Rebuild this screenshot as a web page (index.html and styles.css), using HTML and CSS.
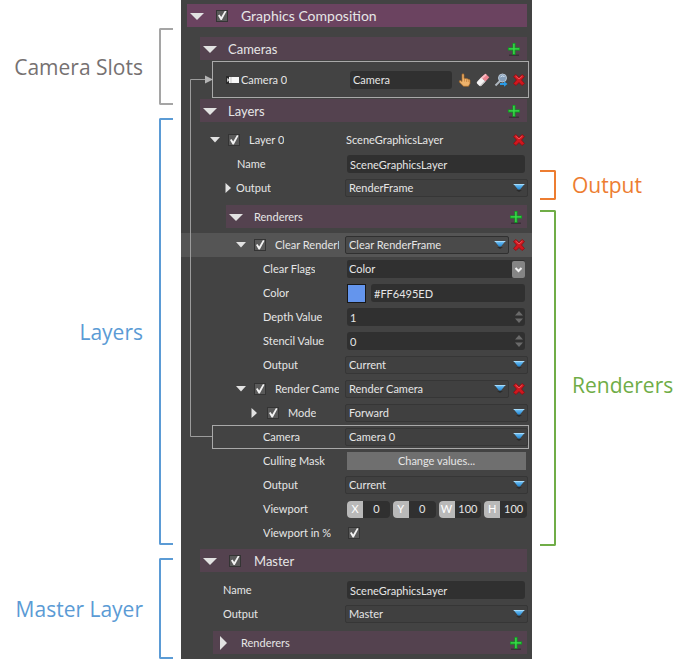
FILE: index.html
```html
<!DOCTYPE html>
<html lang="en">
<head>
<meta charset="utf-8">
<title>Graphics Composition</title>
<link rel="stylesheet" href="styles.css">
</head>
<body>
<svg class="defs" aria-hidden="true">
  <linearGradient id="blue" x1="0" y1="0" x2="0" y2="1"><stop offset="0" stop-color="#7cc8f8"/><stop offset="1" stop-color="#1f86d4"/></linearGradient>
  <symbol id="down" viewBox="0 0 16 16"><path d="M1 5H15L8 12Z" fill="#e2e2e2"/></symbol>
  <symbol id="down-s" viewBox="0 0 16 16"><path d="M3 5H13L8 10.500Z" fill="#e2e2e2"/></symbol>
  <symbol id="right" viewBox="0 0 16 16"><path d="M5 1V15L12 8Z" fill="#e2e2e2"/></symbol>
  <symbol id="right-s" viewBox="0 0 16 16"><path d="M5.500 3V13L11 8Z" fill="#e2e2e2"/></symbol>
  <symbol id="drop" viewBox="0 0 12 8"><path d="M3 6H9L6 8Z" fill="#2b2b2b"/><path d="M.5 0H11.500L7 5.500H5Z" fill="url(#blue)"/><path d="M.5 0H11.500L11 1H1Z" fill="#a5dbfb"/></symbol>
  <symbol id="plus" viewBox="0 0 16 16"><path d="M3 13.500H13V15H3Z" fill="#3b3039"/><path d="M6.500 2H9.500V6.500H14V9.500H9.500V14H6.500V9.500H2V6.500H6.500Z" fill="#0d9a20"/><path d="M7.200 2.700H8.600V7.200H13.200V8.400H8.600V13H7.200V8.400H2.700V7.200H7.200Z" fill="#3edb4d"/></symbol>
  <symbol id="cross" viewBox="0 0 14 14"><path d="M4 1.500L7 4.500L10 1.500L12.500 3.500L9.500 7L12.500 10.500L10 12.500L7 9.500L4 12.500L1.500 10.500L4.500 7L1.500 3.500Z" fill="#d0161e" stroke="#8d0c10" stroke-width=".8"/><path d="M3.600 3L7 6L10.400 3" fill="none" stroke="#f0575a"/></symbol>
</svg>
<main class="page">
  <div class="notes notes-left">
    <div class="note slots"><span>Camera Slots</span><i></i></div>
    <div class="note layers"><span>Layers</span><i></i></div>
    <div class="note master"><span>Master Layer</span><i></i></div>
  </div>

  <section class="panel">
    <div class="bar title">
      <button class="tw" aria-label="Collapse Graphics Composition"><svg><use href="#down"/></svg></button>
      <input type="checkbox" id="gc" checked><label for="gc">Graphics Composition</label>
    </div>

    <div class="bar">
      <button class="tw" aria-label="Collapse Cameras"><svg><use href="#down"/></svg></button>
      <h2>Cameras</h2><button class="add" aria-label="Add camera"><svg><use href="#plus"/></svg></button>
    </div>
    <div class="row framed slot">
      <div class="name">
        <svg class="cam" viewBox="0 0 14 10" aria-hidden="true"><path d="M0 1H3V9H0Z" fill="#292929"/><path d="M1 3L3 4V6L1 7Z" fill="#bbb"/><path d="M3 2H13V8H3Z" fill="#f6f6f6"/><path d="M5 2V8" stroke="#c7c7c7"/></svg>
        <label for="c0">Camera 0</label>
      </div>
      <div class="value">
        <input class="field" id="c0" value="Camera">
        <button class="tool" aria-label="Pick"><svg viewBox="0 0 14 14"><path d="M4 1.200Q5.300.3 6 1.500V5.500Q7.300 4.700 8 5.800Q9.300 5.200 10 6.300Q11.800 6 12 7.500V10.500L10.500 13.300H5.500L1.300 9Q1 7.300 2.700 7.600L4 8.500Z" fill="#eeb36c" stroke="#a96825" stroke-width=".7"/><path d="M6.500 6V8.500M8.500 6.500V9M10.300 7V9" stroke="#bd7932" stroke-width=".6"/></svg></button>
        <button class="tool" aria-label="Clear"><svg viewBox="0 0 14 14"><path d="M9.500.8L13.300 4.200L9.500 8.500L5 4.500Z" fill="#ee8591"/><path d="M9.500.8L10.700 1.900L6.300 6L5 4.500Z" fill="#f9bdc4"/><path d="M5 4.500L9.500 8.500L5 13Q4 13.500 3 12.500L1 10.500Q.3 9.500 1.300 8.500Z" fill="#f5f3f3"/><path d="M9.500 8.500L5 13L3.500 13L8.500 7.700Z" fill="#cbc7c8"/></svg></button>
        <button class="tool" aria-label="Find"><svg viewBox="0 0 14 14"><path d="M6 8L1.500 12.500" stroke="#aeb6be" stroke-width="2"/><circle cx="8.500" cy="5" r="4" fill="#86a0bb" stroke="#b8c6d3"/><path d="M6.500 4Q8 2 10.500 3.500" stroke="#dbe8f4" fill="none"/><path d="M6 10H10V8.300L13.500 11L10 13.700V12H6Z" fill="#2a9be6"/></svg></button>
        <button class="tool" aria-label="Remove"><svg viewBox="0 0 14 14"><use href="#cross"/></svg></button>
      </div>
    </div>

    <div class="bar group">
      <button class="tw" aria-label="Collapse Layers"><svg><use href="#down"/></svg></button>
      <h2>Layers</h2><button class="add" aria-label="Add layer"><svg><use href="#plus"/></svg></button>
    </div>
    <div class="row">
      <div class="name in1"><button class="tw" aria-label="Collapse layer"><svg><use href="#down-s"/></svg></button><input type="checkbox" id="l0" checked><label for="l0">Layer 0</label></div>
      <div class="value"><span class="text">SceneGraphicsLayer</span><button class="tool" aria-label="Remove"><svg viewBox="0 0 14 14"><use href="#cross"/></svg></button></div>
    </div>
    <div class="row">
      <div class="name leaf2"><label for="ln">Name</label></div>
      <div class="value"><input class="field" id="ln" value="SceneGraphicsLayer"></div>
    </div>
    <div class="row">
      <div class="name in2"><button class="tw" aria-label="Expand output"><svg><use href="#right-s"/></svg></button><label for="lo">Output</label></div>
      <div class="value"><span class="pick"><select id="lo"><option>RenderFrame</option></select><svg><use href="#drop"/></svg></span></div>
    </div>
    <div class="bar sub">
      <button class="tw" aria-label="Collapse Renderers"><svg><use href="#down"/></svg></button>
      <h3>Renderers</h3><button class="add" aria-label="Add renderer"><svg><use href="#plus"/></svg></button>
    </div>
    <div class="row selected">
      <div class="name in3"><button class="tw" aria-label="Collapse renderer"><svg><use href="#down-s"/></svg></button><input type="checkbox" id="r1" checked><label for="r1">Clear RenderFrame</label></div>
      <div class="value"><span class="pick"><select aria-label="Renderer type"><option>Clear RenderFrame</option></select><svg><use href="#drop"/></svg></span><button class="tool" aria-label="Remove"><svg viewBox="0 0 14 14"><use href="#cross"/></svg></button></div>
    </div>
    <div class="row">
      <div class="name leaf3"><label for="cf">Clear Flags</label></div>
      <div class="value"><span class="pick flags"><select id="cf"><option>Color</option></select><svg viewBox="0 0 13 17"><rect width="13" height="17" rx="2" fill="#858585"/><path d="M3.500 7L6.500 10L9.500 7" fill="none" stroke="#f1f1f1" stroke-width="2"/></svg></span></div>
    </div>
    <div class="row">
      <div class="name leaf3"><label for="co">Color</label></div>
      <div class="value"><button class="swatch" aria-label="Pick color"></button><input class="field" id="co" value="#FF6495ED"></div>
    </div>
    <div class="row">
      <div class="name leaf3"><label for="dv">Depth Value</label></div>
      <div class="value"><span class="spin"><input class="field" type="number" id="dv" value="1"><svg viewBox="0 0 10 14"><path d="M1 5.500L5 1L9 5.500ZM1 8.500L5 13L9 8.500Z" fill="#6a6a6a"/></svg></span></div>
    </div>
    <div class="row">
      <div class="name leaf3"><label for="sv">Stencil Value</label></div>
      <div class="value"><span class="spin"><input class="field" type="number" id="sv" value="0"><svg viewBox="0 0 10 14"><path d="M1 5.500L5 1L9 5.500ZM1 8.500L5 13L9 8.500Z" fill="#6a6a6a"/></svg></span></div>
    </div>
    <div class="row">
      <div class="name leaf3"><label for="o1">Output</label></div>
      <div class="value"><span class="pick"><select id="o1"><option>Current</option></select><svg><use href="#drop"/></svg></span></div>
    </div>
    <div class="row">
      <div class="name in3"><button class="tw" aria-label="Collapse renderer"><svg><use href="#down-s"/></svg></button><input type="checkbox" id="r2" checked><label for="r2">Render Camera</label></div>
      <div class="value"><span class="pick"><select aria-label="Renderer type"><option>Render Camera</option></select><svg><use href="#drop"/></svg></span><button class="tool" aria-label="Remove"><svg viewBox="0 0 14 14"><use href="#cross"/></svg></button></div>
    </div>
    <div class="row">
      <div class="name in4"><button class="tw" aria-label="Expand mode"><svg><use href="#right-s"/></svg></button><input type="checkbox" id="mo" checked><label for="mo">Mode</label></div>
      <div class="value"><span class="pick"><select aria-label="Mode"><option>Forward</option></select><svg><use href="#drop"/></svg></span></div>
    </div>
    <div class="row framed">
      <div class="name"><label for="ca">Camera</label></div>
      <div class="value"><span class="pick"><select id="ca"><option>Camera 0</option></select><svg><use href="#drop"/></svg></span></div>
    </div>
    <div class="row">
      <div class="name leaf3"><label for="cm">Culling Mask</label></div>
      <div class="value"><button class="change" id="cm">Change values...</button></div>
    </div>
    <div class="row">
      <div class="name leaf3"><label for="o2">Output</label></div>
      <div class="value"><span class="pick"><select id="o2"><option>Current</option></select><svg><use href="#drop"/></svg></span></div>
    </div>
    <div class="row">
      <div class="name leaf3"><span>Viewport</span></div>
      <div class="value rect">
        <span><label for="vx">X</label><input id="vx" value="0"></span>
        <span><label for="vy">Y</label><input id="vy" value="0"></span>
        <span><label for="vw">W</label><input id="vw" value="100"></span>
        <span><label for="vh">H</label><input id="vh" value="100"></span>
      </div>
    </div>
    <div class="row">
      <div class="name leaf3"><label for="vp">Viewport in %</label></div>
      <div class="value"><input type="checkbox" id="vp" checked></div>
    </div>

    <div class="bar group last">
      <button class="tw" aria-label="Collapse Master"><svg><use href="#down"/></svg></button>
      <input type="checkbox" id="ma" checked><label for="ma">Master</label>
    </div>
    <div class="row">
      <div class="name leaf1"><label for="mn">Name</label></div>
      <div class="value"><input class="field" id="mn" value="SceneGraphicsLayer"></div>
    </div>
    <div class="row">
      <div class="name leaf1"><label for="mout">Output</label></div>
      <div class="value"><span class="pick"><select id="mout"><option>Master</option></select><svg><use href="#drop"/></svg></span></div>
    </div>
    <div class="bar sub outer">
      <button class="tw" aria-label="Expand Renderers"><svg><use href="#right"/></svg></button>
      <h3>Renderers</h3><button class="add" aria-label="Add renderer"><svg><use href="#plus"/></svg></button>
    </div>
    <svg class="link" viewBox="0 0 24 364" aria-hidden="true"><path d="M23 362.500H1.500V5.500H17" fill="none" stroke="#9c9c9c"/><path d="M16 1.500L24 5.500L16 9.500Z" fill="#b4b4b4"/></svg>
  </section>

  <div class="notes notes-right">
    <div class="note output"><i></i><span>Output</span></div>
    <div class="note renderers"><i></i><span>Renderers</span></div>
  </div>
</main>
</body>
</html>
```
FILE: styles.css
```css
* { box-sizing: border-box; }

body {
  margin: 0;
  background: #fff;
  font-family: Lato, "Open Sans", sans-serif;
  font-size: 11px;
  line-height: 16px;
  color: #e6e6e6;
}

input, select, button { font: inherit; color: inherit; margin: 0; padding: 0; border: 0; border-radius: 0; background: none; }
svg { display: block; }
.defs { position: absolute; width: 0; height: 0; }

.page {
  display: grid;
  grid-template-columns: 181px 1fr 155px;
  min-height: 100vh;
}

/* Annotations: rows share the panel's height in proportion */
.notes { display: grid; font-family: "Open Sans", sans-serif; font-size: 21px; line-height: 28px; }
.notes-left { grid-template-rows: 28fr 77fr 13fr 427fr 13fr 101fr; padding-right: 8px; }
.notes-right { grid-template-rows: 170fr 30fr 10fr 336fr 113fr; padding-left: 8px; }
.note { display: flex; align-items: center; gap: 16px; min-height: 0; white-space: nowrap; }
.notes-left .note { justify-content: flex-end; }
.note i { align-self: stretch; flex: none; width: 14px; border: 2px solid; }
.notes-left i { border-right: 0; border-radius: 2px 0 0 2px; }
.notes-right i { width: 16px; border-left: 0; border-radius: 0 2px 2px 0; }
.slots { grid-row: 2; color: #767171; }
.slots i { border-color: #a5a5a5; }
.layers { grid-row: 4; color: #5b9bd5; }
.master { grid-row: 6; color: #5b9bd5; }
.output { grid-row: 2; color: #ed7d31; }
.renderers { grid-row: 4; color: #70ad47; }
.renderers span { padding-top: 14px; }

/* Panel */
.panel { position: relative; min-width: 0; padding: 4px 0; background: #434343; }
.link { position: absolute; left: 8px; top: 74px; width: 24px; height: 364px; }

.bar {
  display: flex;
  align-items: center;
  height: 23px;
  margin: 0 5px 0 19px;
  padding: 0 5px 0 2px;
  background: #54424f;
  font-size: 13px;
}
.bar h2, .bar h3 { flex: 1; margin: 0 0 0 10px; font-size: 13px; font-weight: 400; }
.bar h3 { font-size: 11px; }
.bar input { margin: 0 13px 0 11px; }
.title { margin: 0 5px 10px 6px; background: #6b4360; font-size: 14px; }
.group { margin-bottom: 6px; }
.last { margin-top: 4px; }
.sub { margin: 5px 5px 5px 45px; padding-right: 3px; }
.outer { margin-left: 32px; margin-bottom: 0; }
.tw, .tw svg, .add, .add svg { flex: none; width: 16px; height: 16px; }

.row {
  display: grid;
  grid-template-columns: 164px minmax(0, 1fr);
  align-items: center;
  height: 24px;
  padding-right: 4px;
}
.selected { background: #555; }
.framed { grid-template-columns: 132px minmax(0, 1fr); margin: 0 3px 0 31px; padding-right: 0; border: 1px solid #a9a9a9; }
.framed .name { padding-left: 50px; }
.slot { height: 37px; margin-block: 1px; }
.slot .name { gap: 1px; padding-left: 13px; }
.cam { width: 14px; height: 10px; }

.name { display: flex; align-items: center; min-width: 0; padding-right: 6px; overflow: hidden; white-space: nowrap; }
.name label { overflow: hidden; }
.name input { margin: 0 9px 0 5px; }
.in1 { padding-left: 26px; }
.in2 { padding-left: 39px; }
.in3 { padding-left: 52px; }
.in4 { padding-left: 65px; }
.leaf1 { padding-left: 42px; }
.leaf2 { padding-left: 56px; }
.leaf3 { padding-left: 82px; }

.value { display: flex; align-items: center; min-width: 0; }
.text { flex: 1; padding-left: 1px; }

input[type="checkbox"] {
  appearance: none;
  flex: none;
  width: 12px;
  height: 12px;
  background: #5a5a5a;
  border: 1px solid #343434;
}
input[type="checkbox"]:checked::before {
  content: "";
  display: block;
  width: 10px;
  height: 10px;
  background: #f2f2f2;
  clip-path: polygon(10% 50%, 25% 40%, 42% 65%, 80% 0, 95% 8%, 48% 95%, 36% 95%);
}
.value input[type="checkbox"] { margin-left: 3px; }

.field {
  flex: 1;
  width: 100%;
  min-width: 0;
  height: 18px;
  margin: 0 3px 0 2px;
  padding: 0 3px;
  border-radius: 3px;
  background: #303030;
}
.slot .field { margin: 0 6px 0 5px; }
.slot .tool { margin-right: 4px; }
input[type="number"] { appearance: textfield; }
input::-webkit-inner-spin-button { appearance: none; }

.pick, .spin { flex: 1; display: grid; align-items: center; min-width: 0; }
.pick > *, .spin > * { grid-area: 1 / 1; }
.pick select {
  appearance: none;
  width: 100%;
  height: 18px;
  padding: 0 20px 0 3px;
  border: 1px solid #363636;
  border-radius: 2px;
  background: #404040;
}
.selected select { background: #4a4a4a; border-color: #303030; }
.pick svg { justify-self: end; width: 12px; height: 8px; margin-right: 3px; pointer-events: none; }
.flags, .spin { margin: 0 3px 0 2px; }
.flags select { padding-left: 2px; border: 0; background: #303030; }
.flags svg { width: 13px; height: 17px; margin: 0; }
.spin .field { margin: 0; }
.spin svg { justify-self: end; width: 10px; height: 14px; margin-right: 1px; pointer-events: none; }

.tool, .tool svg { flex: none; width: 14px; height: 14px; }
.value > .tool:last-child { margin-left: 3px; margin-right: 2px; }
.slot .value > .tool:last-child { margin-left: 0; }
.swatch { flex: none; width: 19px; height: 19px; margin: 0 3px 0 2px; border: 1px solid #181818; background: #6495ed; }
.change { flex: 1; height: 18px; margin: 0 2px; background: #6f6f6f; }

.rect { gap: 3px; padding: 0 1px 0 2px; }
.rect span { flex: 1; display: flex; min-width: 0; height: 17px; border-radius: 4px; overflow: hidden; background: #303030; }
.rect label { flex: none; width: 16px; background: #b9b9b9; color: #fff; text-align: center; }
.rect input { flex: 1; width: 100%; min-width: 0; text-align: center; }
```
